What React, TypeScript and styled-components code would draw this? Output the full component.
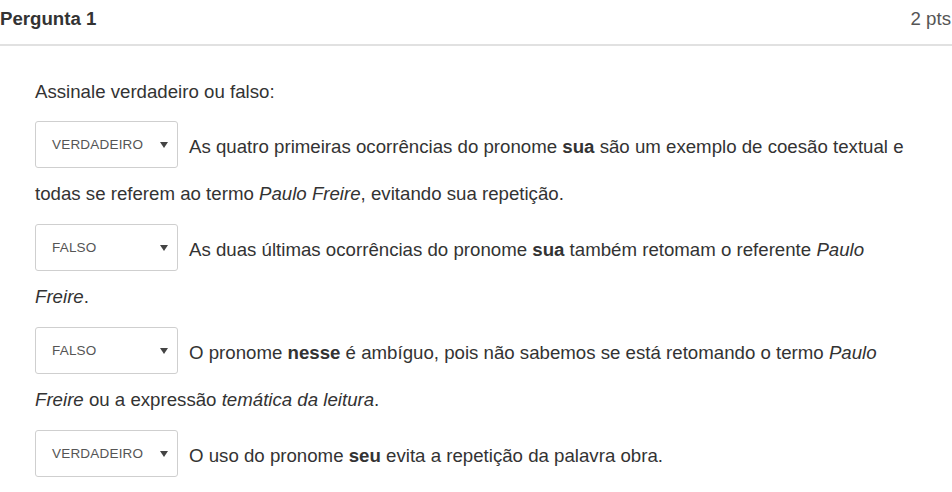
import React from "react";
import styled, { createGlobalStyle } from "styled-components";

const GlobalStyle = createGlobalStyle`
  html, body {
    margin: 0;
    padding: 0;
    background: #ffffff;
  }
  body {
    font-family: "Liberation Sans", Arial, sans-serif;
    color: #333333;
    overflow: hidden;
  }
`;

const Card = styled.section`
  width: 952px;
  height: 492px;
  box-sizing: border-box;
  background: #ffffff;
`;

const Header = styled.header`
  display: flex;
  justify-content: space-between;
  align-items: flex-start;
  height: 46px;
  box-sizing: border-box;
  padding: 8px 1px 0 0;
  border-bottom: 2px solid #e1e1e1;
  font-size: 18.67px;
  line-height: normal;
`;

const Title = styled.h2`
  margin: 0;
  font-size: inherit;
  font-weight: bold;
  color: #333333;
`;

const Points = styled.span`
  color: #555555;
`;

const Body = styled.div`
  padding: 22px 38px 0 35px;
  font-size: 18.67px;
  line-height: 47px;
  color: #333333;
`;

const Prompt = styled.p`
  margin: 0 0 6px;
`;

const Statement = styled.p`
  margin: 0 0 7px;
`;

const DropSelect = styled.span`
  display: inline-flex;
  align-items: center;
  justify-content: space-between;
  width: 143px;
  height: 47px;
  box-sizing: border-box;
  padding: 0 9px 0 16px;
  margin-right: 11px;
  border: 1px solid #cfcfcf;
  border-radius: 3px;
  background: #ffffff;
  vertical-align: 4px;
  font-size: 13.5px;
  line-height: normal;
  letter-spacing: 0.2px;
  color: #555555;
`;

const DropLabel = styled.span`
  text-transform: uppercase;
`;

const Arrow = styled.svg`
  width: 8px;
  height: 6px;
  flex: none;
`;

const Bold = styled.b`
  font-weight: bold;
`;

const Em = styled.i`
  font-style: italic;
`;

const Dropdown = ({ value }: { value: string }) => (
  <DropSelect>
    <DropLabel>{value}</DropLabel>
    <Arrow viewBox="0 0 8 6">
      <path d="M0 0 H8 L4 6 Z" fill="#444444" />
    </Arrow>
  </DropSelect>
);

export default function App() {
  return (
    <>
      <GlobalStyle />
      <Card>
        <Header>
          <Title>Pergunta 1</Title>
          <Points>2 pts</Points>
        </Header>
        <Body>
          <Prompt>Assinale verdadeiro ou falso:</Prompt>
          <Statement>
            <Dropdown value="VERDADEIRO" />
            As quatro primeiras ocorrências do pronome <Bold>sua</Bold> são um exemplo de coesão textual e todas se
            referem ao termo <Em>Paulo Freire</Em>, evitando sua repetição.
          </Statement>
          <Statement>
            <Dropdown value="FALSO" />
            As duas últimas ocorrências do pronome <Bold>sua</Bold> também retomam o referente <Em>Paulo Freire</Em>.
          </Statement>
          <Statement>
            <Dropdown value="FALSO" />
            O pronome <Bold>nesse</Bold> é ambíguo, pois não sabemos se está retomando o termo <Em>Paulo Freire</Em> ou
            a expressão <Em>temática da leitura</Em>.
          </Statement>
          <Statement>
            <Dropdown value="VERDADEIRO" />
            O uso do pronome <Bold>seu</Bold> evita a repetição da palavra obra.
          </Statement>
        </Body>
      </Card>
    </>
  );
}
